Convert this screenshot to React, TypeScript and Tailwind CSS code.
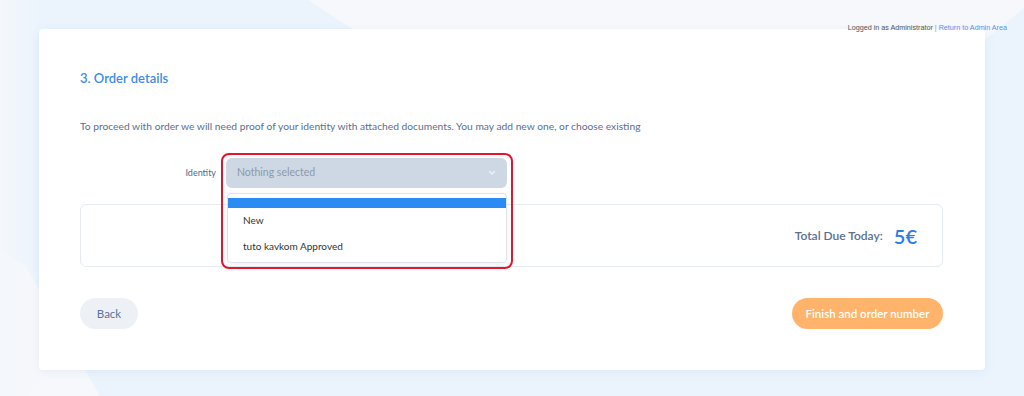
export default function App() {
  const font = { fontFamily: "Lato, 'Noto Sans', sans-serif" };
  return (
    <div className="relative w-[1024px] h-[396px] overflow-hidden bg-[#ebf4fd]" style={font}>
      {/* background shapes */}
      <svg className="absolute inset-0" width="1024" height="396" viewBox="0 0 1024 396">
        <polygon points="308,0 1024,0 1024,8 960,60 400,60" fill="#f6f8fb" />
        <polygon points="0,250 25,265 100,396 0,396" fill="#f6f8fb" />
      </svg>
      <div className="absolute left-0 top-0 h-full w-[40px] bg-gradient-to-r from-[#f4f7fb] to-transparent" />

      <div className="relative">
        <div className="relative z-10 flex h-[29px] justify-end pr-[17px] pt-[23px]">
          <span className="text-[7.2px] leading-[9px] text-[#555]" style={{ fontFamily: "'Liberation Sans', Arial, sans-serif" }}>
            Logged in as Administrator <span className="text-[#999]">|</span>{" "}
            <span className="text-[#5b8ff0]">Return to Admin Area</span>
          </span>
        </div>

        <div className="ml-[39px] w-[946px] h-[341px] rounded-[4px] bg-white pl-[41px] pr-[42px] pt-[40px] shadow-[0_2px_10px_rgba(120,150,190,0.12)]">
          <h2 className="text-[13px] leading-[18px] font-semibold text-[#3d8be6]">3. Order details</h2>
          <p className="mt-[32px] text-[10.25px] leading-[14px] text-[#5a6f8f]">
            To proceed with order we will need proof of your identity with attached documents. You may add new one, or choose existing
          </p>

          <div className="relative z-10 mt-[25px] flex items-center">
            <label className="w-[137px] pr-px text-right text-[9px] text-[#4d6a8f]">Identity</label>
            <div className="relative ml-[9px]">
              <div className="flex h-[30px] w-[281px] items-center justify-between rounded-[6px] bg-[#cdd8e4] pl-[11px] pr-[11px]">
                <span className="text-[10.5px] text-[#8c99a8]">Nothing selected</span>
                <svg width="8" height="6" viewBox="0 0 8 6" fill="none">
                  <path d="M1.5 1.5 4 4 6.5 1.5" stroke="#eef2f6" strokeWidth="1.3" strokeLinecap="round" />
                </svg>
              </div>
              <div className="absolute left-px top-[35px] w-[280px] rounded-[4px] border border-[#dfe3e8] bg-white pt-[4px] pb-[9px] shadow-[0_2px_6px_rgba(0,0,0,0.06)]">
                <div className="h-[10px] bg-[#2a8cf2]" />
                <div className="px-[15px] pt-[5px] text-[10px] leading-[14px] text-[#333]">New</div>
                <div className="px-[15px] pt-[12px] text-[10px] leading-[14px] text-[#333]">tuto kavkom Approved</div>
              </div>
              <div className="pointer-events-none absolute -left-[5px] -top-[5px] h-[116px] w-[292px] rounded-[8px] border-2 border-[#e3142d]" />
            </div>
          </div>

          <div className="mt-[16px] flex h-[63px] items-center justify-end rounded-[6px] border border-[#e6ebf1] pr-[25px]">
            <span className="text-[12px] font-semibold text-[#5a6f8f]">Total Due Today:</span>
            <span className="ml-[11px] text-[20px] font-semibold leading-none text-[#2a7de1]">5€</span>
          </div>

          <div className="mt-[31px] flex items-center justify-between">
            <button className="h-[31px] w-[58px] rounded-full bg-[#edf1f6] text-[11.5px] text-[#5a72a0]">Back</button>
            <button className="h-[31px] w-[151px] rounded-full bg-[#ffb36b] text-[11.5px] font-semibold text-white">Finish and order number</button>
          </div>
        </div>
      </div>
    </div>
  );
}
